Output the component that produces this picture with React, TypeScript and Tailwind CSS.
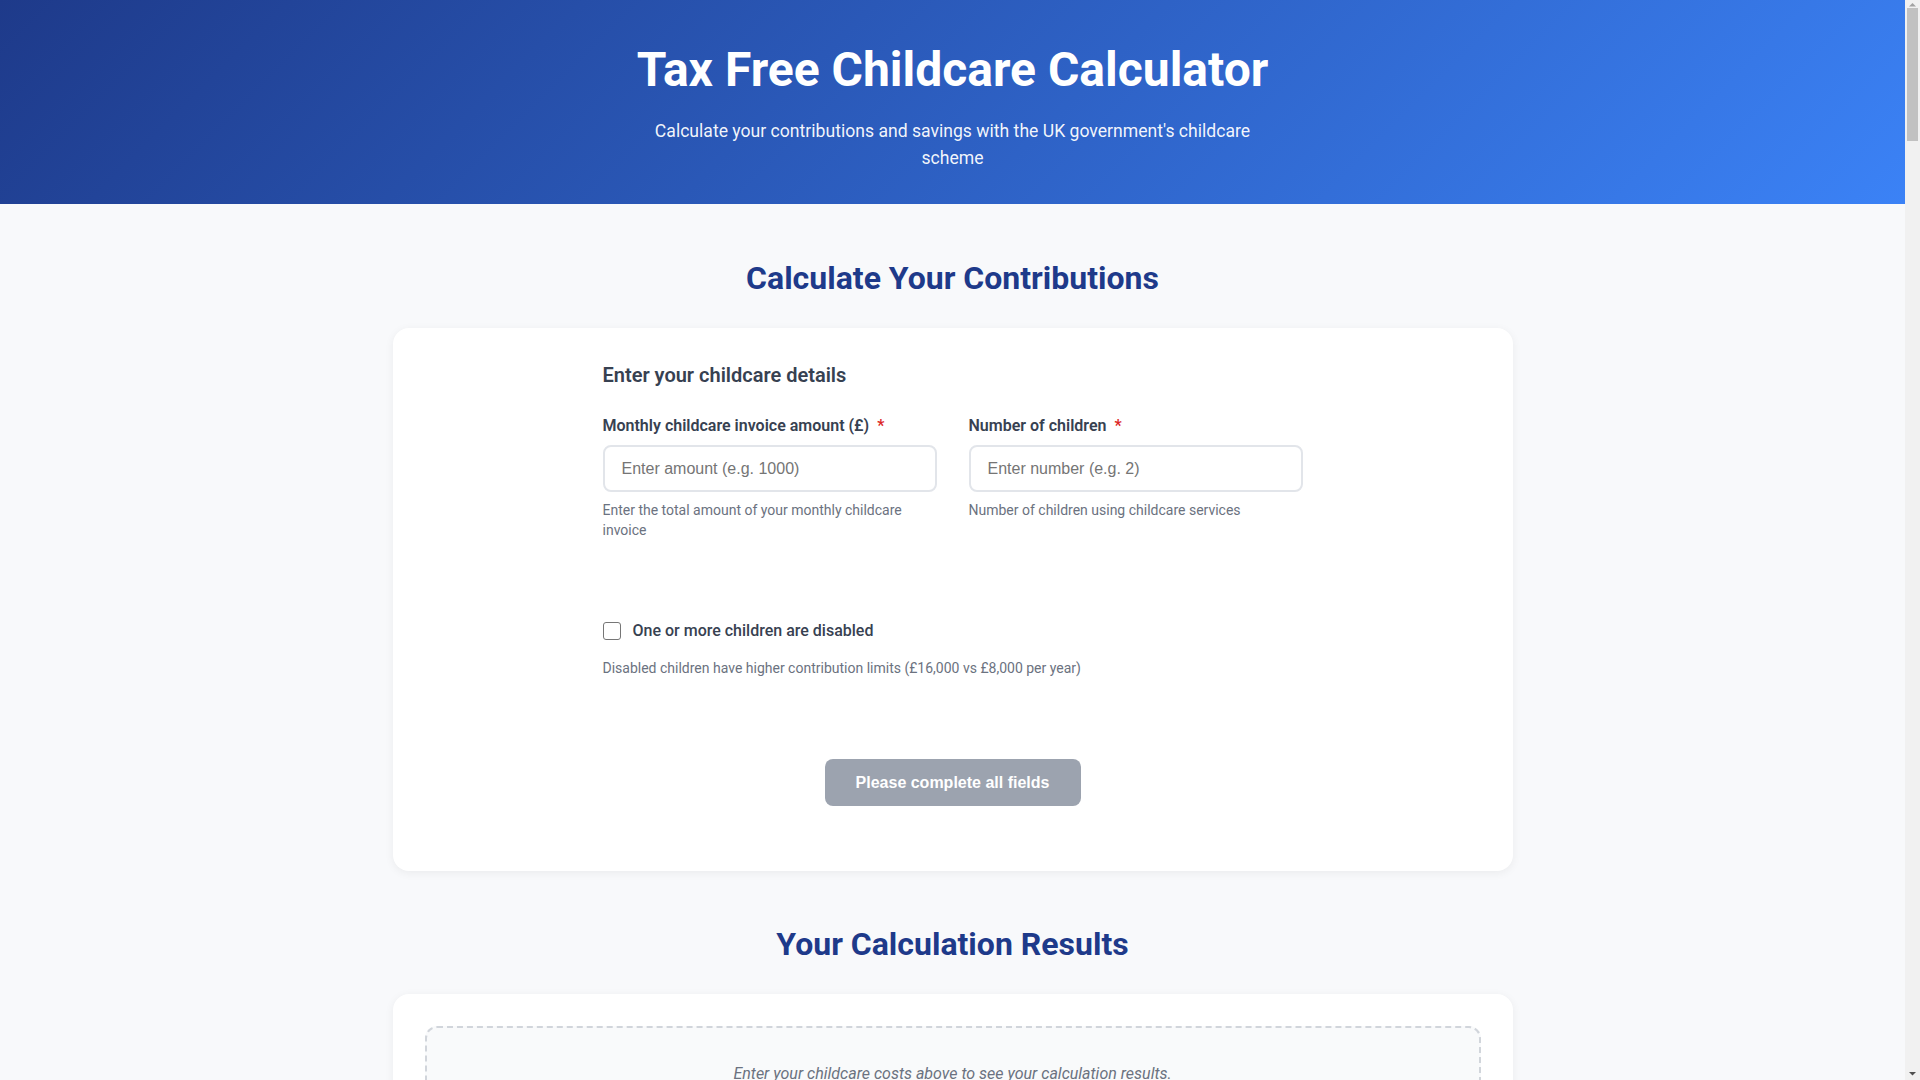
import React, { useState } from "react";

const faqs = [
  {
    q: "What is Tax-Free Childcare?",
    a: "Tax-Free Childcare is a UK government scheme that helps working families with the cost of approved childcare. For every £8 you pay in, the government adds £2.",
  },
  {
    q: "How much can I receive?",
    a: "You can get up to £500 every 3 months (£2,000 a year) for each child, or up to £1,000 every 3 months (£4,000 a year) if a child is disabled.",
  },
  {
    q: "Who is eligible?",
    a: "Parents who are working, earning at least the equivalent of 16 hours a week at the National Minimum Wage, and not earning more than £100,000 a year.",
  },
  {
    q: "Which providers can I pay?",
    a: "You can pay any childcare provider that is signed up to the scheme, including nurseries, childminders, nannies, after-school clubs and holiday clubs.",
  },
  {
    q: "How do I open an account?",
    a: "Apply online through the government website. Once approved, you can pay money into the account and use it to pay your provider directly.",
  },
  {
    q: "Can I use it with other support?",
    a: "You can use Tax-Free Childcare alongside free childcare hours, but not at the same time as Universal Credit childcare or childcare vouchers.",
  },
];

// Classic window scrollbar rail shown beside the scrolling page
function ScrollRail() {
  return (
    <div className="flex w-[15px] shrink-0 flex-col items-center bg-[#f1f1f1]">
      <svg width="15" height="7" viewBox="0 0 15 7" className="mt-[1px] shrink-0">
        <path d="M4 5.5 L7.5 2 L11 5.5 Z" fill="#a3a3a3" />
      </svg>
      <div className="h-[133px] w-[11px] shrink-0 bg-[#c1c1c1]" />
      <div className="flex-1" />
      <svg width="15" height="8" viewBox="0 0 15 8" className="mb-[2px] shrink-0">
        <path d="M4 2 L11 2 L7.5 5.5 Z" fill="#505050" />
      </svg>
    </div>
  );
}

export default function App() {
  const [amount, setAmount] = useState("");
  const [children, setChildren] = useState("");
  const [disabled, setDisabled] = useState(false);

  const ready = amount !== "" && children !== "";

  return (
    <div className="flex h-screen bg-[#f8f9fb] font-['Roboto',sans-serif] text-[#374151]">
      <div className="min-w-0 flex-1 overflow-y-auto [scrollbar-width:none]">
        <header className="bg-[linear-gradient(135deg,#1e3a8a_0%,#3b82f6_100%)] px-6 pt-[41px] pb-[32px] text-center text-white">
          <h1 className="text-[48px] leading-[58px] font-bold">Tax Free Childcare Calculator</h1>
          <p className="mx-auto mt-[19px] max-w-[600px] text-[17.6px] leading-[27px] text-white/95">
            Calculate your contributions and savings with the UK government's childcare scheme
          </p>
        </header>

        <main className="mx-auto max-w-[1120px]">
          <section className="pt-[55px]">
            <h2 className="text-center text-[32px] leading-[38px] font-bold text-[#1e3a8a]">
              Calculate Your Contributions
            </h2>
            <div className="mt-[31px] rounded-2xl bg-white px-8 pt-[33px] pb-[65px] shadow-[0_2px_10px_rgba(0,0,0,0.06)]">
              <div className="mx-auto max-w-[700px]">
                <h3 className="text-[20px] leading-[28px] font-semibold text-[#374151]">
                  Enter your childcare details
                </h3>

                <div className="mt-[26px] grid grid-cols-2 gap-8">
                  <div>
                    <label className="block text-[16px] leading-[22px] font-semibold text-[#374151]">
                      Monthly childcare invoice amount (£)
                      <span className="ml-2 text-[#dc2626]">*</span>
                    </label>
                    <input
                      type="number"
                      value={amount}
                      onChange={(e) => setAmount(e.target.value)}
                      placeholder="Enter amount (e.g. 1000)"
                      className="mt-[8px] block h-[47px] w-full rounded-lg border-2 border-[#e2e5ea] bg-white px-[17px] font-['Liberation_Sans',Arial,sans-serif] text-[16px] text-[#1f2937] outline-none placeholder:text-[#757575]"
                    />
                    <p className="mt-[8px] text-[14px] leading-[20px] text-[#6b7280]">
                      Enter the total amount of your monthly childcare invoice
                    </p>
                  </div>
                  <div>
                    <label className="block text-[16px] leading-[22px] font-semibold text-[#374151]">
                      Number of children
                      <span className="ml-2 text-[#dc2626]">*</span>
                    </label>
                    <input
                      type="number"
                      value={children}
                      onChange={(e) => setChildren(e.target.value)}
                      placeholder="Enter number (e.g. 2)"
                      className="mt-[8px] block h-[47px] w-full rounded-lg border-2 border-[#e2e5ea] bg-white px-[17px] font-['Liberation_Sans',Arial,sans-serif] text-[16px] text-[#1f2937] outline-none placeholder:text-[#757575]"
                    />
                    <p className="mt-[8px] text-[14px] leading-[20px] text-[#6b7280]">
                      Number of children using childcare services
                    </p>
                  </div>
                </div>

                <div className="mt-[80px]">
                  <label className="flex items-center gap-3 text-[16px] leading-[22px] font-medium text-[#374151]">
                    <input
                      type="checkbox"
                      checked={disabled}
                      onChange={(e) => setDisabled(e.target.checked)}
                      className="h-[18px] w-[18px] appearance-none rounded-[3px] border border-[#767676] bg-white checked:bg-[#2563eb]"
                    />
                    One or more children are disabled
                  </label>
                  <p className="mt-[16px] text-[14px] leading-[20px] text-[#6b7280]">
                    Disabled children have higher contribution limits (£16,000 vs £8,000 per year)
                  </p>
                </div>

                <div className="mt-[81px] flex justify-center">
                  <button
                    type="button"
                    disabled={!ready}
                    className="h-[47px] w-[256px] rounded-lg bg-[#9ca3af] font-['Liberation_Sans',Arial,sans-serif] text-[16px] font-bold text-white"
                  >
                    Please complete all fields
                  </button>
                </div>
              </div>
            </div>
          </section>

          <section className="pt-[54px]">
            <h2 className="text-center text-[32px] leading-[38px] font-bold text-[#1e3a8a]">
              Your Calculation Results
            </h2>
            <div className="mt-[31px] rounded-2xl bg-white p-8 shadow-[0_2px_10px_rgba(0,0,0,0.06)]">
              <div className="rounded-xl border-2 border-dashed border-[#d1d5db] bg-[#f9fafb] px-6 py-[34px] text-center">
                <p className="text-[16px] leading-[24px] text-[#6b7280] italic">
                  Enter your childcare costs above to see your calculation results.
                </p>
              </div>
            </div>
          </section>

          <section className="pt-[54px]">
            <h2 className="text-center text-[32px] leading-[38px] font-bold text-[#1e3a8a]">
              How Tax-Free Childcare Works
            </h2>
            <div className="mt-[31px] grid grid-cols-3 gap-6">
              {[
                ["Pay in", "Pay money into your online childcare account whenever you like."],
                ["Top-up", "The government adds £2 for every £8 you pay in, up to the limits."],
                ["Pay provider", "Use the account to pay your registered childcare provider."],
              ].map(([t, d]) => (
                <div key={t} className="rounded-2xl bg-white p-8 shadow-[0_2px_10px_rgba(0,0,0,0.06)]">
                  <h3 className="text-[20px] leading-[28px] font-semibold">{t}</h3>
                  <p className="mt-3 text-[16px] leading-[24px] text-[#6b7280]">{d}</p>
                </div>
              ))}
            </div>
          </section>

          <section className="pt-[54px] pb-[80px]">
            <h2 className="text-center text-[32px] leading-[38px] font-bold text-[#1e3a8a]">
              Frequently Asked Questions
            </h2>
            <div className="mt-[31px] flex flex-col gap-6">
              {faqs.map((f) => (
                <div key={f.q} className="rounded-2xl bg-white p-8 shadow-[0_2px_10px_rgba(0,0,0,0.06)]">
                  <h3 className="text-[20px] leading-[28px] font-semibold">{f.q}</h3>
                  <p className="mt-3 text-[16px] leading-[24px] text-[#6b7280]">{f.a}</p>
                </div>
              ))}
            </div>
          </section>
        </main>

        <footer className="bg-[#1f2937] px-6 py-12 text-center text-[14px] text-[#d1d5db]">
          This calculator provides estimates only. Check the official government guidance for full details.
        </footer>
      </div>
      <ScrollRail />
    </div>
  );
}
